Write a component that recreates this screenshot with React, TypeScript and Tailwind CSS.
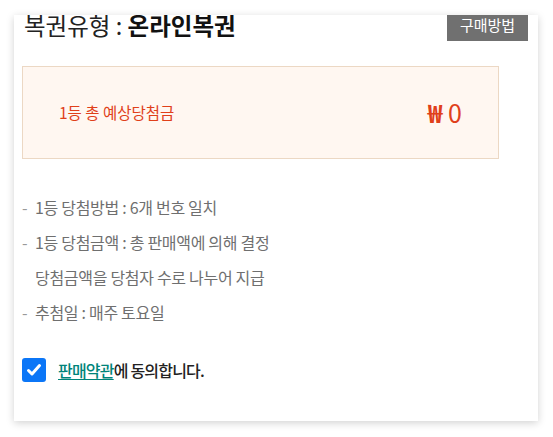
const rules = [
  { dash: true, text: "1등 당첨방법 : 6개 번호 일치" },
  { dash: true, text: "1등 당첨금액 : 총 판매액에 의해 결정" },
  { dash: false, text: "당첨금액을 당첨자 수로 나누어 지급" },
  { dash: true, text: "추첨일 : 매주 토요일" },
];

const App = () => {
  return (
    <div className="w-[553px] h-[437px] bg-white pt-[15px] pl-[14px] font-['Noto_Sans_CJK_KR','Noto_Sans',sans-serif]">
      <div className="w-[524px] h-[406px] overflow-hidden bg-white shadow-[0_2px_8px_rgba(0,0,0,0.18)] pl-[8px] pr-[10px]">
        <div className="-mt-[5px] flex h-[31px] items-center justify-between">
          <h2 className="pl-[2px] text-[23.5px] leading-none text-[#222]">
            복권유형 : <strong className="font-bold text-[#111]">온라인복권</strong>
          </h2>
          <button className="h-[30px] w-[81px] bg-[#707070] text-[15px] text-white">
            구매방법
          </button>
        </div>

        <div className="mt-[25px] flex h-[93px] w-[477px] items-center justify-between border border-[#ecd8c4] bg-[#fff7f1] px-[36px]">
          <span className="text-[15.5px] text-[#e0401a]">1등 총 예상당첨금</span>
          <span className="text-[25px] leading-none text-[#e0401a]">
            <b className="font-bold">₩</b> 0
          </span>
        </div>

        <ul className="mt-[30px] flex flex-col">
          {rules.map((r) => (
            <li key={r.text} className="flex h-[35px] items-center text-[16px] text-[#6f6f6f] tracking-[-0.3px]">
              <span className="w-[13px] text-[#999]">{r.dash ? "-" : ""}</span>
              <span>{r.text}</span>
            </li>
          ))}
        </ul>

        <label className="mt-[29px] flex items-center gap-[12px]">
          <span className="flex h-[24px] w-[24px] items-center justify-center rounded-[3px] bg-[#0b76f7]">
            <svg width="16" height="16" viewBox="0 0 16 16" fill="none">
              <path d="M2.5 8.5l3.5 3.5 7.5-8.5" stroke="white" strokeWidth="3" strokeLinecap="round" strokeLinejoin="round" />
            </svg>
          </span>
          <span className="text-[16px] font-medium text-[#222] tracking-[-0.8px]">
            <a className="text-[#00847a] underline underline-offset-2">판매약관</a>에 동의합니다.
          </span>
        </label>
      </div>
    </div>
  );
};

export default App;
